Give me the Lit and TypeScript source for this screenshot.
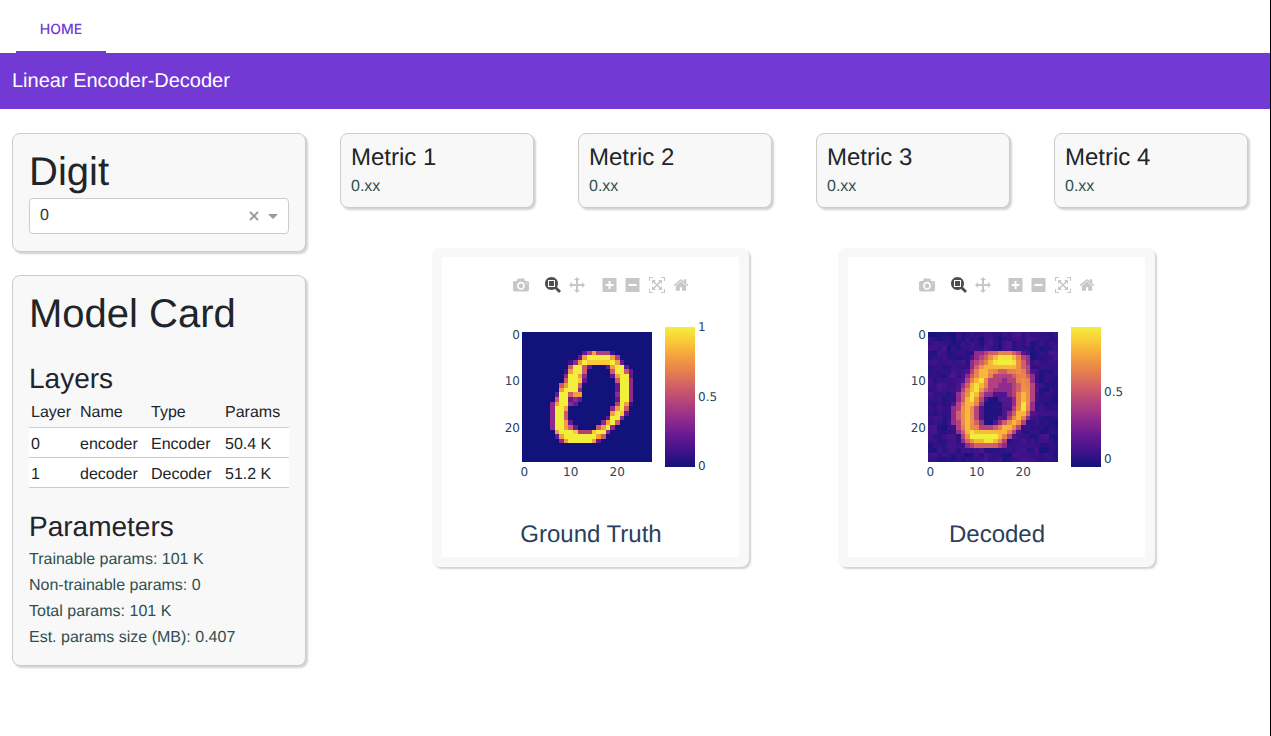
import { LitElement, html, css, svg } from "lit";
import { customElement, property } from "lit/decorators.js";

const STOPS = ["#11137a", "#3f1289", "#661a92", "#8e2a8e", "#b03f7f", "#cc5a6b", "#e47a52", "#f49c40", "#fac737", "#f2ee3c"];

const hex = (s: string) => [1, 3, 5].map((i) => parseInt(s.slice(i, i + 2), 16));
function colour(t: number) {
  const p = Math.max(0, Math.min(1, t)) * (STOPS.length - 1);
  const i = Math.min(STOPS.length - 2, Math.floor(p));
  const a = hex(STOPS[i]);
  const b = hex(STOPS[i + 1]);
  const f = p - i;
  return `rgb(${a.map((v, k) => Math.round(v + (b[k] - v) * f)).join(",")})`;
}

type Sparse = Record<number, [number, string]>;

const TRUTH: Sparse = {
  4: [13, "2474441"],
  5: [12, "279999974"],
  6: [10, "137988888972"],
  7: [10, "5995200027992"],
  8: [9, "179950000059952"],
  9: [9, "399730000027992"],
  10: [9, "599820000005993"],
  11: [8, "5799500000002993"],
  12: [8, "7999300000002993"],
  13: [7, "29957700000003993"],
  14: [7, "59923200000002993"],
  15: [6, "379932000000004971"],
  16: [6, "39970000000003795"],
  17: [6, "39950000000007982"],
  18: [6, "3995000000002993"],
  19: [6, "399720000003795"],
  20: [6, "39975200005793"],
  21: [7, "799984448993"],
  22: [7, "27999999975"],
  23: [8, "379999972"],
};

const DECODED: Sparse = {
  4: [10, "22344555431"],
  5: [9, "1234678887532"],
  6: [9, "2345789998642"],
  7: [9, "2467777777643"],
  8: [8, "135776544556531"],
  9: [8, "246775333345542"],
  10: [7, "1357863332335652"],
  11: [7, "2478753322234653"],
  12: [6, "135786432222346631"],
  13: [6, "24687422111235763"],
  14: [6, "24786310011125763"],
  15: [5, "135775200001125862"],
  16: [5, "236763100001136852"],
  17: [5, "246763100001247741"],
  18: [5, "24676310001136752"],
  19: [5, "2367642001246763"],
  20: [6, "35765333457753"],
  21: [6, "2478777777753"],
  22: [7, "369999997531"],
  23: [7, "2467788753"],
  24: [8, "234444432"],
};

const hash = (r: number, c: number) => {
  const h = Math.sin(r * 12.9898 + c * 78.233) * 43758.5453;
  return h - Math.floor(h);
};

function cells(data: Sparse, noisy: boolean) {
  const out: { r: number; c: number; t: number }[] = [];
  for (let r = 0; r < 28; r++) {
    for (let c = 0; c < 28; c++) {
      const row = data[r];
      let v = -1;
      if (row && c >= row[0] && c < row[0] + row[1].length) v = Number(row[1][c - row[0]]);
      if (noisy) {
        const n = (0.5 * hash(r, c) + 0.5 * hash(r >> 1, c >> 1)) * 1.3 + 0.1;
        const lift = v >= 2 && v <= 5 ? 0.7 : 0;
        out.push({ r, c, t: Math.min(1, (v < 0 ? n : v * 1.08 + lift + 0.2 + n * 0.2) / 9.3) });
      } else {
        out.push({ r, c, t: v < 0 ? 0 : v / 9 });
      }
    }
  }
  return out;
}

const D = 1000;
const ICONS: { x: number; d: string; w: number; active?: boolean }[] = [
  { x: 71, w: D, d: "M500 450c-83 0-150-67-150-150 0-83 67-150 150-150 83 0 150 67 150 150 0 83-67 150-150 150z m400 150h-120c-16 0-34 13-39 29l-31 93c-6 15-23 28-40 28h-340c-16 0-34-13-39-28l-31-94c-6-15-23-28-40-28h-120c-55 0-100-45-100-100v-450c0-55 45-100 100-100h800c55 0 100 45 100 100v450c0 55-45 100-100 100z m-400-550c-138 0-250 112-250 250 0 138 112 250 250 250 138 0 250-112 250-250 0-138-112-250-250-250z m365 380c-19 0-35 16-35 35 0 19 16 35 35 35 19 0 35-16 35-35 0-19-16-35-35-35z" },
  { x: 103, w: D, active: true, d: "M1000-25l-250 251c40 63 63 138 63 218 0 224-182 406-407 406-224 0-406-182-406-406s183-406 407-406c80 0 155 22 218 62l250-250 125 125z m-812 250l0 438 437 0 0-438-437 0z m62 375l313 0 0-312-313 0 0 312z" },
  { x: 127, w: D, d: "M1000 350l-187 188 0-125-250 0 0 250 125 0-188 187-187-187 125 0 0-250-250 0 0 125-188-188 186-187 0 125 252 0 0-252-125 0 187-186 188 186-125 0 0 252 250 0 0-125 187 187z" },
  { x: 159.5, w: 875, d: "M1 787l0-875 875 0 0 875-875 0z m687-500l-187 0 0-187-125 0 0 187-188 0 0 125 188 0 0 187 125 0 0-187 187 0 0-125z" },
  { x: 182.5, w: 875, d: "M0 788l0-876 875 0 0 876-875 0z m688-500l-500 0 0 125 500 0 0-125z" },
  { x: 207, w: D, d: "M250 850l-187 0-63 0 0-62 0-188 63 0 0 188 187 0 0 62z m688 0l-188 0 0-62 188 0 0-188 62 0 0 188 0 62-62 0z m-875-938l0 188-63 0 0-188 0-62 63 0 187 0 0 62-187 0z m875 188l0-188-188 0 0-62 188 0 62 0 0 62 0 188-62 0z m-125 188l-1 0-93-94-156 156 156 156 92-93 2 0 0 250-250 0 0-2 93-92-156-156-156 156 94 92 0 2-250 0 0-250 0 0 93 93 157-156-157-156-93 94 0 0 0-250 250 0 0 0-94 93 156 157 156-157-93-93 0 0 250 0 0 250z" },
  { x: 231, w: 928.6, d: "M786 296v-267q0-15-11-26t-25-10h-214v214h-143v-214h-214q-15 0-25 10t-11 26v267q0 1 0 2t0 2l321 264 321-264q1-1 1-4z m124 39l-34-41q-5-5-12-6h-2q-7 0-12 3l-386 322-386-322q-7-4-13-4-7 2-12 7l-35 41q-4 5-3 13t6 12l401 334q18 15 42 15t43-15l136-114v109q0 8 5 13t13 5h107q8 0 13-5t5-13v-227l122-102q5-5 6-12t-4-13z" },
];

@customElement("plot-card")
class PlotCard extends LitElement {
  static styles = css`
    :host { display: block; }
    .card {
      width: 297px;
      padding: 9px 10px 10px;
      background: #f8f8f8;
      border-radius: 8px;
      box-shadow: 2px 2px 2px lightgrey;
    }
    svg.plot { display: block; background: #fff; }
    .tick { font: 12px "DejaVu Sans", sans-serif; fill: #2a3f5f; }
    .title { font: 24px "Liberation Sans", Arial, sans-serif; fill: #2a3f5f; text-rendering: geometricPrecision; }
    .off { fill: rgba(68, 68, 68, 0.3); }
    .on { fill: rgba(68, 68, 68, 0.95); }
  `;

  @property() label = "";
  @property({ type: Boolean }) noisy = false;
  @property({ attribute: false }) data: Sparse = {};
  @property({ attribute: false }) bar: { t: string; y: number }[] = [];

  render() {
    const S = 130 / 28;
    const X = 80;
    const Y = 75;
    const gradient = STOPS.map((c, i) => svg`<stop offset=${i / (STOPS.length - 1)} stop-color=${c}></stop>`);
    const id = this.noisy ? "gd" : "gt";
    return html`<div class="card">
      <svg class="plot" width="297" height="300" viewBox="0 0 297 300">
        <defs>
          <linearGradient id=${id} x1="0" y1="1" x2="0" y2="0">${gradient}</linearGradient>
        </defs>
        ${ICONS.map(
          (i) => svg`<svg x=${i.x} y="20" width="16" height="16" viewBox="0 0 ${i.w} 1000">
            <path class=${i.active ? "on" : "off"} transform="matrix(1 0 0 -1 0 850)" d=${i.d}></path>
          </svg>`
        )}
        ${cells(this.data, this.noisy).map(
          (p) => svg`<rect shape-rendering="crispEdges" x=${X + p.c * S} y=${Y + p.r * S} width=${S + 0.2} height=${S + 0.2} fill=${colour(p.t)}></rect>`
        )}
        ${[0, 10, 20].map(
          (v) => svg`
            <text class="tick" text-anchor="end" x="78" y=${82 + v * S}>${v}</text>
            <text class="tick" text-anchor="middle" x=${X + 2.3 + v * S} y="219">${v}</text>`
        )}
        <rect x="223" y="70" width="30" height="140" fill="url(#${id})"></rect>
        ${this.bar.map((b) => svg`<text class="tick" x="256" y=${b.y}>${b.t}</text>`)}
        <text class="title" text-anchor="middle" x="149" y="285">${this.label}</text>
      </svg>
    </div>`;
  }
}

@customElement("app-root")
class AppRoot extends LitElement {
  static styles = css`
    :host {
      display: block;
      height: 736px;
      box-sizing: border-box;
      border-right: 1px solid #000;
      overflow: hidden;
      font: 16px/24px "Liberation Sans", Arial, sans-serif;
      text-rendering: geometricPrecision;
      color: #212529;
      background: #fff;
    }
    h1, h3, h4, p { margin: 0; font-weight: 400; }
    h1 { font-size: 40px; line-height: 48px; }
    h3 { font-size: 28px; line-height: 34px; }
    h4 { font-size: 24px; line-height: 29px; }
    p { color: #2f4f4f; }
    .tabs { height: 53px; padding-left: 16px; box-sizing: border-box; display: flex; }
    .tab {
      width: 90px;
      box-sizing: border-box;
      border-bottom: 2px solid #7239d5;
      color: #7239d5;
      font: 500 14px/59px Inter, sans-serif;
      text-align: center;
      height: 53px;
    }
    .banner {
      height: 56px;
      box-sizing: border-box;
      background: #7239d5;
      color: #fff;
      font-size: 20px;
      line-height: 54px;
      padding: 1px 0 0 12px;
    }
    .layout { display: flex; padding: 24px 22px 0 12px; gap: 34px; }
    .side { width: 294px; flex: none; display: flex; flex-direction: column; gap: 23px; }
    .card {
      box-sizing: border-box;
      background: #f8f8f8;
      border: 1px solid #ccc;
      border-radius: 8px;
      box-shadow: 2px 2px 2px lightgrey;
    }
    .digit { padding: 14px 16px 0; height: 119px; }
    .digit h1 { margin-bottom: 2px; }
    .select {
      height: 36px;
      box-sizing: border-box;
      background: #fff;
      border: 1px solid #ccc;
      border-radius: 4px;
      display: flex;
      align-items: center;
      padding: 0 10px;
      color: #333;
    }
    .select .val { flex: 1; line-height: 34px; margin-top: -1px; }
    .select svg { display: block; }
    .caret { margin-left: 9px; }
    .model { padding: 14px 16px 0; height: 391px; }
    .model h1 { margin-bottom: 24px; }
    .model h3.params { margin-top: 22px; margin-bottom: 3px; }
    table { border-collapse: collapse; width: 260px; table-layout: fixed; margin-top: 1px; }
    th, td {
      font-weight: 400;
      text-align: left;
      height: 30px;
      box-sizing: border-box;
      border-bottom: 1px solid #ccc;
      white-space: nowrap;
    }
    th { padding: 2px 0 0 2px; line-height: 27px; }
    td { padding: 4px 0 0 2px; line-height: 25px; background: #fff; }
    .c1 { width: 49px; }
    .c2 { width: 71px; }
    .c3 { width: 74px; }
    .c4 { width: 66px; }
    .lines p { line-height: 26px; }
    .main { flex: 1; min-width: 0; }
    .metrics { display: grid; grid-template-columns: repeat(4, 194px); column-gap: 44px; }
    .metric { height: 75px; padding: 9px 10px 0; }
    .metric p { margin-top: 3px; }
    .plots { display: flex; gap: 89px; padding: 40px 0 0 92px; }
  `;

  render() {
    return html`
      <div class="tabs"><div class="tab">HOME</div></div>
      <div class="banner">Linear Encoder-Decoder</div>
      <div class="layout">
        <div class="side">
          <div class="card digit">
            <h1>Digit</h1>
            <div class="select">
              <span class="val">0</span>
              <svg width="10" height="10" viewBox="0 0 10 10">
                <path d="M1 1 L9 9 M9 1 L1 9" stroke="#999" stroke-width="1.8" fill="none"></path>
              </svg>
              <svg class="caret" width="10" height="5" viewBox="0 0 10 5">
                <path d="M0 0 H10 L5 5 Z" fill="#999"></path>
              </svg>
            </div>
          </div>
          <div class="card model">
            <h1>Model Card</h1>
            <h3>Layers</h3>
            <table>
              <colgroup>
                <col class="c1" /><col class="c2" /><col class="c3" /><col class="c4" />
              </colgroup>
              <thead><tr><th>Layer</th><th>Name</th><th>Type</th><th>Params</th></tr></thead>
              <tbody>
                <tr><td>0</td><td>encoder</td><td>Encoder</td><td>50.4 K</td></tr>
                <tr><td>1</td><td>decoder</td><td>Decoder</td><td>51.2 K</td></tr>
              </tbody>
            </table>
            <h3 class="params">Parameters</h3>
            <div class="lines">
              <p>Trainable params: 101 K</p>
              <p>Non-trainable params: 0</p>
              <p>Total params: 101 K</p>
              <p>Est. params size (MB): 0.407</p>
            </div>
          </div>
        </div>
        <div class="main">
          <div class="metrics">
            ${[1, 2, 3, 4].map(
              (n) => html`<div class="card metric"><h4>Metric ${n}</h4><p>0.xx</p></div>`
            )}
          </div>
          <div class="plots">
            <plot-card
              label="Ground Truth"
              .data=${TRUTH}
              .bar=${[{ t: "1", y: 74 }, { t: "0.5", y: 144 }, { t: "0", y: 213 }]}
            ></plot-card>
            <plot-card
              label="Decoded"
              noisy
              .data=${DECODED}
              .bar=${[{ t: "0.5", y: 139 }, { t: "0", y: 206 }]}
            ></plot-card>
          </div>
        </div>
      </div>
    `;
  }
}
